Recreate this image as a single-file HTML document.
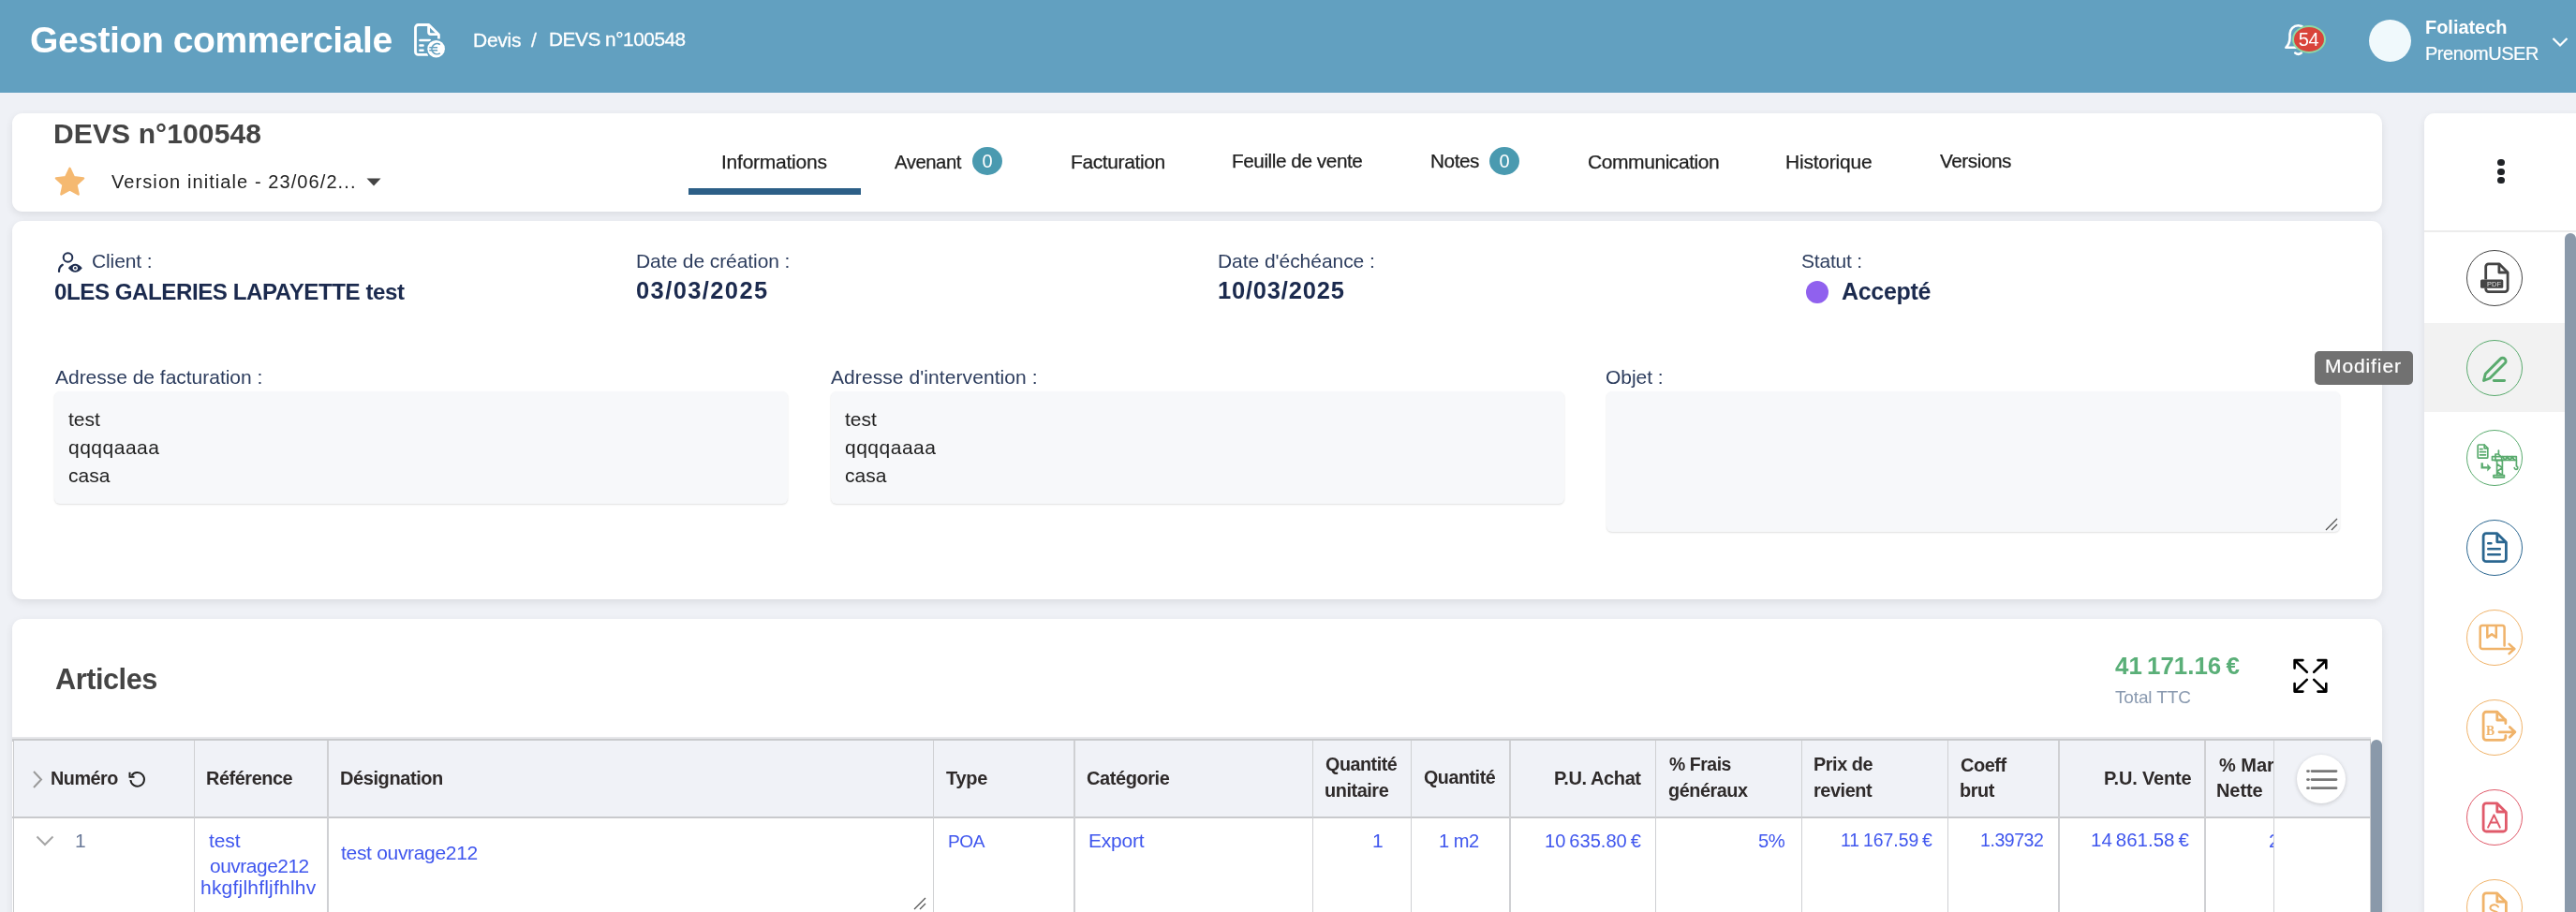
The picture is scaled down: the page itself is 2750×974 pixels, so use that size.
<!DOCTYPE html>
<html><head><meta charset="utf-8"><style>
*{box-sizing:border-box;margin:0;padding:0}
html,body{width:2750px;height:974px;overflow:hidden;background:#eff1f6;font-family:"Liberation Sans",sans-serif}
body{position:relative}
.abs{position:absolute}
.t{position:absolute;white-space:nowrap;line-height:1;-webkit-font-smoothing:antialiased;will-change:transform}
.ic{position:absolute;overflow:visible;will-change:transform}
#hdr{position:absolute;left:0;top:0;width:2750px;height:99px;background:#62a0c0}
.card{position:absolute;background:#fff;border-radius:11px;box-shadow:0 3px 8px rgba(0,0,0,0.085)}
.badge54{position:absolute;left:2447px;top:27px;width:36px;height:30px;border-radius:50%;background:#d9443a;border:2px solid #8ed9a5;color:#fff;font-size:20px;line-height:26.5px;text-align:center;letter-spacing:-0.3px;text-indent:-1px;will-change:transform}
.avatar{position:absolute;left:2529px;top:21px;width:45px;height:45px;border-radius:50%;background:#f0f9fc}
.tbadge{position:absolute;width:32px;height:30px;border-radius:50%;background:#4a9ab0;color:#fff;font-size:20px;line-height:30px;text-align:center;will-change:transform}
.box{position:absolute;background:#f7f8fa;border-radius:6px;box-shadow:0 1px 2px rgba(0,0,0,0.13)}
.menubtn{position:absolute;left:2452px;top:806px;width:52px;height:52px;border-radius:50%;background:#fff;box-shadow:0 1px 4px rgba(0,0,0,0.18)}
.ring{position:absolute;width:60px;height:60px;border-radius:50%;border:1.8px solid #444}
</style></head><body>
<div id="hdr"></div>
<div class="t" style="left:32.05px;top:22.92px;font-size:39.08px;font-weight:700;color:#fff;letter-spacing:-0.450px;">Gestion commerciale</div>
<svg class="ic" style="left:438px;top:22px" width="40" height="42" viewBox="0 0 40 42">
<path d="M19 36.4H8.5a3 3 0 0 1-3-3V7.5a3 3 0 0 1 3-3h11.3L30.4 15v4.5" fill="none" stroke="#fff" stroke-width="2.8" stroke-linejoin="round"/>
<path d="M19.6 5v7.3a2.3 2.3 0 0 0 2.3 2.3H29" fill="none" stroke="#fff" stroke-width="2.8" stroke-linejoin="round"/>
<path d="M10.4 21h10.5M10.4 26.5h3.2M10.4 31.8h3.2" stroke="#fff" stroke-width="2.5" stroke-linecap="round"/>
<circle cx="27.6" cy="30.2" r="10.8" fill="#62a0c0"/>
<circle cx="27.6" cy="30.2" r="9.3" fill="#fff"/>
<path d="M31.8 25.6a5.6 5.6 0 1 0 0 9.2" fill="none" stroke="#62a0c0" stroke-width="1.6"/>
<path d="M20.3 28.8h8.8M20.3 31.8h8.8" stroke="#62a0c0" stroke-width="1.4"/>
</svg>
<div class="t" style="left:504.80px;top:32.22px;font-size:21px;font-weight:400;color:#fff;letter-spacing:-0.253px;-webkit-text-stroke:0.3px #fff;">Devis</div>
<div class="t" style="left:567.00px;top:32.22px;font-size:21px;font-weight:400;color:#fff;letter-spacing:0.000px;-webkit-text-stroke:0.3px #fff;">/</div>
<div class="t" style="left:585.81px;top:32.40px;font-size:20.79px;font-weight:400;color:#fff;letter-spacing:-0.450px;-webkit-text-stroke:0.3px #fff;">DEVS n°100548</div>
<svg class="ic" style="left:2432px;top:20px" width="40" height="44" viewBox="0 0 40 44">
<path d="M8.3 30.8c2.7-2.7 4.2-5.5 4.2-10.5v-4a9 9 0 0 1 18 0v4c0 5 1.5 7.8 4.2 10.5z" fill="none" stroke="#fff" stroke-width="2.6" stroke-linejoin="round"/>
<path d="M18.2 36.6q3.3 2.6 6.6 0" fill="none" stroke="#fff" stroke-width="2.6" stroke-linecap="round"/>
</svg>
<div class="badge54">54</div>
<div class="avatar"></div>
<div class="t" style="left:2588.70px;top:18.67px;font-size:20px;font-weight:700;color:#fff;letter-spacing:-0.035px;">Foliatech</div>
<div class="t" style="left:2588.75px;top:46.99px;font-size:19.98px;font-weight:400;color:#fff;letter-spacing:-0.450px;-webkit-text-stroke:0.2px #fff;">PrenomUSER</div>
<svg class="ic" style="left:2723px;top:38px" width="20" height="14" viewBox="0 0 20 14">
<path d="M2.5 3l7.5 7.5L17.5 3" fill="none" stroke="#fff" stroke-width="2.2"/></svg>
<div class="card" style="left:13px;top:121px;width:2530px;height:105px"></div>
<div class="t" style="left:56.90px;top:127.80px;font-size:30px;font-weight:700;color:#444;letter-spacing:0.127px;">DEVS n°100548</div>
<svg class="ic" style="left:57px;top:178px" width="35" height="33" viewBox="0 0 24 23">
<path d="M12 1.2l3.1 6.6 7.1.8-5.3 4.9 1.5 7.1L12 17l-6.4 3.6 1.5-7.1L1.8 8.6l7.1-.8z" fill="#f5b971" stroke="#f5b971" stroke-width="1.6" stroke-linejoin="round"/></svg>
<div class="t" style="left:118.90px;top:183.87px;font-size:20px;font-weight:400;color:#222;letter-spacing:1.083px;">Version initiale - 23/06/2...</div>
<svg class="ic" style="left:391px;top:190px" width="16" height="9" viewBox="0 0 16 9"><path d="M0.5 0.5h15L8 8.5z" fill="#444"/></svg>
<div class="t" style="left:769.60px;top:162.22px;font-size:21px;font-weight:400;color:#1f1f1f;letter-spacing:-0.241px;-webkit-text-stroke:0.25px #1f1f1f;">Informations</div>
<div class="t" style="left:955.40px;top:162.82px;font-size:20.3px;font-weight:400;color:#1f1f1f;letter-spacing:-0.450px;-webkit-text-stroke:0.25px #1f1f1f;">Avenant</div>
<div class="t" style="left:1142.50px;top:162.22px;font-size:21px;font-weight:400;color:#1f1f1f;letter-spacing:-0.387px;-webkit-text-stroke:0.25px #1f1f1f;">Facturation</div>
<div class="t" style="left:1314.71px;top:162.41px;font-size:20.78px;font-weight:400;color:#1f1f1f;letter-spacing:-0.450px;-webkit-text-stroke:0.25px #1f1f1f;">Feuille de vente</div>
<div class="t" style="left:1526.51px;top:162.41px;font-size:20.78px;font-weight:400;color:#1f1f1f;letter-spacing:-0.450px;-webkit-text-stroke:0.25px #1f1f1f;">Notes</div>
<div class="t" style="left:1694.50px;top:162.22px;font-size:21px;font-weight:400;color:#1f1f1f;letter-spacing:-0.426px;-webkit-text-stroke:0.25px #1f1f1f;">Communication</div>
<div class="t" style="left:1906.00px;top:162.22px;font-size:21px;font-weight:400;color:#1f1f1f;letter-spacing:-0.207px;-webkit-text-stroke:0.25px #1f1f1f;">Historique</div>
<div class="t" style="left:2071.00px;top:162.42px;font-size:20.77px;font-weight:400;color:#1f1f1f;letter-spacing:-0.450px;-webkit-text-stroke:0.25px #1f1f1f;">Versions</div>
<div class="abs" style="left:735px;top:201px;width:184px;height:7px;background:#2c5f87"></div>
<div class="tbadge" style="left:1038px;top:157px">0</div>
<div class="tbadge" style="left:1590.4px;top:157px">0</div>
<div class="card" style="left:13px;top:236px;width:2530px;height:404px"></div>
<svg class="ic" style="left:58px;top:266px" width="34" height="28" viewBox="0 0 34 28">
<circle cx="14.5" cy="9" r="4.8" fill="none" stroke="#1e2d4f" stroke-width="2"/>
<path d="M8.8 16.8a8 8 0 0 0-3.8 7.2" fill="none" stroke="#1e2d4f" stroke-width="2.2" stroke-linecap="round"/>
<path d="M14.8 20.3q7.5-9 15 0q-7.5 9-15 0z" fill="#1e2d4f"/>
<circle cx="22.3" cy="20.3" r="2.6" fill="#fff"/><circle cx="22.3" cy="20.3" r="1.2" fill="#1e2d4f"/>
</svg>
<div class="t" style="left:97.90px;top:268.22px;font-size:21px;font-weight:400;color:#2d3d5e;letter-spacing:-0.118px;">Client :</div>
<div class="t" style="left:57.55px;top:299.57px;font-size:24.13px;font-weight:700;color:#1b2a4e;letter-spacing:-0.450px;">0LES GALERIES LAPAYETTE test</div>
<div class="t" style="left:679.00px;top:268.22px;font-size:21px;font-weight:400;color:#2d3d5e;letter-spacing:-0.078px;">Date de création :</div>
<div class="t" style="left:679.00px;top:298.41px;font-size:25.5px;font-weight:700;color:#1b2a4e;letter-spacing:1.395px;">03/03/2025</div>
<div class="t" style="left:1300.30px;top:268.22px;font-size:21px;font-weight:400;color:#2d3d5e;letter-spacing:-0.049px;">Date d'échéance :</div>
<div class="t" style="left:1300.30px;top:298.41px;font-size:25.5px;font-weight:700;color:#1b2a4e;letter-spacing:0.806px;">10/03/2025</div>
<div class="t" style="left:1922.90px;top:268.22px;font-size:21px;font-weight:400;color:#2d3d5e;letter-spacing:-0.200px;">Statut :</div>
<div class="abs" style="left:1928px;top:300px;width:24px;height:24px;border-radius:50%;background:#9061ee"></div>
<div class="t" style="left:1966.00px;top:298.64px;font-size:25px;font-weight:700;color:#1b2a4e;letter-spacing:-0.310px;">Accepté</div>
<div class="t" style="left:58.50px;top:392.22px;font-size:21px;font-weight:400;color:#2d3d5e;letter-spacing:-0.020px;">Adresse de facturation :</div>
<div class="t" style="left:886.70px;top:392.22px;font-size:21px;font-weight:400;color:#2d3d5e;letter-spacing:0.076px;">Adresse d'intervention :</div>
<div class="t" style="left:1714.30px;top:392.22px;font-size:21px;font-weight:400;color:#2d3d5e;letter-spacing:-0.055px;">Objet :</div>
<div class="box" style="left:58px;top:418px;width:783px;height:120px"></div>
<div class="t" style="left:73.40px;top:437.22px;font-size:21px;font-weight:400;color:#222;letter-spacing:0.000px;">test</div>
<div class="t" style="left:73.40px;top:467.22px;font-size:21px;font-weight:400;color:#222;letter-spacing:0.507px;">qqqqaaaa</div>
<div class="t" style="left:73.40px;top:497.22px;font-size:21px;font-weight:400;color:#222;letter-spacing:0.000px;">casa</div>
<div class="box" style="left:887px;top:418px;width:783px;height:120px"></div>
<div class="t" style="left:902.40px;top:437.22px;font-size:21px;font-weight:400;color:#222;letter-spacing:0.000px;">test</div>
<div class="t" style="left:902.40px;top:467.22px;font-size:21px;font-weight:400;color:#222;letter-spacing:0.507px;">qqqqaaaa</div>
<div class="t" style="left:902.40px;top:497.22px;font-size:21px;font-weight:400;color:#222;letter-spacing:0.000px;">casa</div>
<div class="box" style="left:1715px;top:418px;width:783px;height:150px"></div>
<svg class="ic" style="left:2481px;top:552px" width="16" height="16" viewBox="0 0 16 16"><path d="M2 14L14 2M8 14l6-6" stroke="#555" stroke-width="1.3"/></svg>
<div class="card" style="left:13px;top:661px;width:2530px;height:400px"></div>
<div class="t" style="left:58.60px;top:710.05px;font-size:30.66px;font-weight:700;color:#444;letter-spacing:-0.450px;">Articles</div>
<div class="t" style="left:2257.50px;top:699.27px;font-size:25.91px;font-weight:700;color:#5aaf78;letter-spacing:-0.450px;">41 171.16 €</div>
<div class="t" style="left:2257.50px;top:734.92px;font-size:19px;font-weight:400;color:#8a9ab0;letter-spacing:-0.141px;">Total TTC</div>
<svg class="ic" style="left:2446px;top:702px" width="40" height="40" viewBox="0 0 40 40">
<g fill="none" stroke="#000" stroke-width="2.6" stroke-linecap="round" stroke-linejoin="round">
<path d="M3.6 11.6V3.1h8.8M4.2 3.8l12.6 12"/><path d="M28.5 3.1h8.8v8.5M36.7 3.8L24.2 15.8"/>
<path d="M3.6 28.1v8.5h8.8M4.2 35.9l12.6-12"/><path d="M37.3 28.1v8.5h-8.8M36.7 35.9L24.2 23.9"/>
</g></svg>
<div class="abs" style="left:13px;top:787px;width:2518px;height:2px;background:#e6e7ea"></div>
<div class="abs" style="left:13px;top:789px;width:2518px;height:2.5px;background:#c9cacd"></div>
<div class="abs" style="left:15px;top:791px;width:2516px;height:81px;background:#f0f2f7"></div>
<div class="abs" style="left:13px;top:872px;width:2518px;height:2px;background:#c9cacd"></div>
<div class="abs" style="left:13.5px;top:789px;width:1.8px;height:200px;background:#c9cacd"></div>
<div class="abs" style="left:2529.5px;top:789px;width:1.5px;height:200px;background:#c9cacd"></div>
<div class="abs" style="left:206.7px;top:791px;width:1.6px;height:200px;background:#cfd0d3"></div>
<div class="abs" style="left:349.2px;top:791px;width:1.6px;height:200px;background:#cfd0d3"></div>
<div class="abs" style="left:995.9px;top:791px;width:1.6px;height:200px;background:#cfd0d3"></div>
<div class="abs" style="left:1146.0px;top:791px;width:1.6px;height:200px;background:#cfd0d3"></div>
<div class="abs" style="left:1400.8px;top:791px;width:1.6px;height:200px;background:#cfd0d3"></div>
<div class="abs" style="left:1505.7px;top:791px;width:1.6px;height:200px;background:#cfd0d3"></div>
<div class="abs" style="left:1611.0px;top:791px;width:1.6px;height:200px;background:#cfd0d3"></div>
<div class="abs" style="left:1766.9px;top:791px;width:1.6px;height:200px;background:#cfd0d3"></div>
<div class="abs" style="left:1922.7px;top:791px;width:1.6px;height:200px;background:#cfd0d3"></div>
<div class="abs" style="left:2078.7px;top:791px;width:1.6px;height:200px;background:#cfd0d3"></div>
<div class="abs" style="left:2197.3px;top:791px;width:1.6px;height:200px;background:#cfd0d3"></div>
<div class="abs" style="left:2353.2px;top:791px;width:1.6px;height:200px;background:#cfd0d3"></div>
<div class="abs" style="left:2426.6px;top:791px;width:1.6px;height:200px;background:#cfd0d3"></div>
<svg class="ic" style="left:33px;top:822px" width="14" height="21" viewBox="0 0 14 21"><path d="M3 2l8 8.5L3 19" fill="none" stroke="#9a9a9a" stroke-width="2"/></svg>
<div class="t" style="left:53.71px;top:822.06px;font-size:19.78px;font-weight:700;color:#2e2a2a;letter-spacing:-0.450px;">Numéro</div>
<svg class="ic" style="left:136px;top:822px" width="21" height="21" viewBox="0 0 21 21">
<path d="M4.5 6.5A7.3 7.3 0 1 1 3.4 11" fill="none" stroke="#222" stroke-width="2"/><path d="M2.5 2.8v5h5" fill="none" stroke="#222" stroke-width="2"/></svg>
<div class="t" style="left:219.70px;top:821.64px;font-size:19.92px;font-weight:700;color:#2e2a2a;letter-spacing:-0.450px;">Référence</div>
<div class="t" style="left:362.50px;top:820.77px;font-size:20px;font-weight:700;color:#2e2a2a;letter-spacing:-0.414px;">Désignation</div>
<div class="t" style="left:1010.00px;top:820.87px;font-size:20px;font-weight:700;color:#2e2a2a;letter-spacing:-0.291px;">Type</div>
<div class="t" style="left:1160.00px;top:820.57px;font-size:20px;font-weight:700;color:#2e2a2a;letter-spacing:-0.428px;">Catégorie</div>
<div class="t" style="left:1415.00px;top:807.21px;font-size:19.72px;font-weight:700;color:#2e2a2a;letter-spacing:-0.450px;">Quantité</div>
<div class="t" style="left:1414.01px;top:834.55px;font-size:19.9px;font-weight:700;color:#2e2a2a;letter-spacing:-0.450px;">unitaire</div>
<div class="t" style="left:1519.90px;top:821.03px;font-size:19.69px;font-weight:700;color:#2e2a2a;letter-spacing:-0.450px;">Quantité</div>
<div class="t" style="left:1659.40px;top:820.77px;font-size:20px;font-weight:700;color:#2e2a2a;letter-spacing:-0.409px;">P.U. Achat</div>
<div class="t" style="left:1781.70px;top:807.45px;font-size:19.43px;font-weight:700;color:#2e2a2a;letter-spacing:-0.450px;">% Frais</div>
<div class="t" style="left:1781.10px;top:834.60px;font-size:19.85px;font-weight:700;color:#2e2a2a;letter-spacing:-0.450px;">généraux</div>
<div class="t" style="left:1936.01px;top:807.06px;font-size:19.89px;font-weight:700;color:#2e2a2a;letter-spacing:-0.450px;">Prix de</div>
<div class="t" style="left:1936.00px;top:834.53px;font-size:19.93px;font-weight:700;color:#2e2a2a;letter-spacing:-0.450px;">revient</div>
<div class="t" style="left:2092.90px;top:806.99px;font-size:19.98px;font-weight:700;color:#2e2a2a;letter-spacing:-0.450px;">Coeff</div>
<div class="t" style="left:2091.90px;top:834.55px;font-size:19.91px;font-weight:700;color:#2e2a2a;letter-spacing:-0.450px;">brut</div>
<div class="t" style="left:2246.30px;top:820.77px;font-size:20px;font-weight:700;color:#2e2a2a;letter-spacing:-0.168px;">P.U. Vente</div>
<div class="t" style="left:2366.40px;top:834.47px;font-size:20px;font-weight:700;color:#2e2a2a;letter-spacing:-0.072px;">Nette</div>
<div class="abs" style="left:2355px;top:791px;width:71.5px;height:81px;overflow:hidden"><div class="t" style="left:13.60px;top:15.97px;font-size:20px;font-weight:700;color:#2e2a2a;letter-spacing:0.000px;">% Marge</div>
</div>
<div class="menubtn"></div>
<svg class="ic" style="left:2460px;top:818px" width="38" height="28" viewBox="0 0 38 28">
<g stroke="#777" stroke-width="2.8" stroke-linecap="round"><path d="M3.5 5.6h1M3.5 14.6h1M3.5 23.7h1"/><path d="M8 5.6h26M8 14.6h26M8 23.7h26"/></g></svg>
<div class="abs" style="left:2531px;top:790px;width:12px;height:300px;background:#8a99aa;border-radius:6px 6px 0 0"></div>
<svg class="ic" style="left:37px;top:890px" width="22" height="16" viewBox="0 0 22 16"><path d="M2.5 3.5l8.5 8.5 8.5-8.5" fill="none" stroke="#a5a5a5" stroke-width="2"/></svg>
<div class="t" style="left:80.30px;top:887.22px;font-size:21px;font-weight:400;color:#6b7a99;letter-spacing:0.000px;">1</div>
<div class="t" style="left:223.30px;top:886.62px;font-size:21px;font-weight:400;color:#3f56ee;letter-spacing:-0.105px;">test</div>
<div class="t" style="left:223.70px;top:914.82px;font-size:20.89px;font-weight:400;color:#3f56ee;letter-spacing:-0.450px;">ouvrage212</div>
<div class="t" style="left:214.00px;top:936.82px;font-size:21px;font-weight:400;color:#3f56ee;letter-spacing:0.212px;">hkgfjlhfljfhlhv</div>
<div class="t" style="left:364.40px;top:900.02px;font-size:21px;font-weight:400;color:#3f56ee;letter-spacing:-0.309px;">test ouvrage212</div>
<svg class="ic" style="left:974px;top:957px" width="16" height="16" viewBox="0 0 16 16"><path d="M2 14L14 2M8 14l6-6" stroke="#555" stroke-width="1.3"/></svg>
<div class="t" style="left:1012.29px;top:888.50px;font-size:19.14px;font-weight:400;color:#3f56ee;letter-spacing:-0.450px;">POA</div>
<div class="t" style="left:1162.30px;top:886.92px;font-size:21px;font-weight:400;color:#3f56ee;letter-spacing:-0.212px;">Export</div>
<div class="t" style="left:1464.80px;top:886.92px;font-size:21px;font-weight:400;color:#3f56ee;letter-spacing:0.000px;">1</div>
<div class="t" style="left:1536.04px;top:887.69px;font-size:20.09px;font-weight:400;color:#3f56ee;letter-spacing:-0.450px;">1 m2</div>
<div class="t" style="left:1648.74px;top:887.70px;font-size:20.08px;font-weight:400;color:#3f56ee;letter-spacing:-0.450px;">10 635.80 €</div>
<div class="t" style="left:1877.20px;top:887.60px;font-size:20.2px;font-weight:400;color:#3f56ee;letter-spacing:-0.450px;">5%</div>
<div class="t" style="left:1965.08px;top:888.29px;font-size:19.38px;font-weight:400;color:#3f56ee;letter-spacing:-0.450px;">11 167.59 €</div>
<div class="t" style="left:2114.07px;top:888.18px;font-size:19.52px;font-weight:400;color:#3f56ee;letter-spacing:-0.450px;">1.39732</div>
<div class="t" style="left:2231.73px;top:887.37px;font-size:20.47px;font-weight:400;color:#3f56ee;letter-spacing:-0.450px;">14 861.58 €</div>
<div class="abs" style="left:2355px;top:874px;width:71.5px;height:100px;overflow:hidden"><div class="t" style="left:67.00px;top:12.92px;font-size:21px;font-weight:400;color:#3f56ee;letter-spacing:0.000px;">28</div>
</div>
<div class="card" style="left:2588px;top:121px;width:240px;height:900px;border-radius:11px"></div>
<div class="abs" style="left:2588px;top:246px;width:162px;height:2px;background:#ececec"></div>
<div class="abs" style="left:2666.4px;top:170.0px;width:7.4px;height:7.4px;border-radius:50%;background:#1f2226"></div>
<div class="abs" style="left:2666.4px;top:179.5px;width:7.4px;height:7.4px;border-radius:50%;background:#1f2226"></div>
<div class="abs" style="left:2666.4px;top:188.9px;width:7.4px;height:7.4px;border-radius:50%;background:#1f2226"></div>
<div class="abs" style="left:2588px;top:345px;width:150px;height:95px;background:#f2f2f2"></div>
<div class="abs" style="left:2738px;top:249px;width:12px;height:800px;background:#8a99aa;border-radius:6px 6px 0 0"></div>
<div class="ring" style="left:2633px;top:267px;border-color:#444"></div>
<div class="ring" style="left:2633px;top:363px;border-color:#5aab6e"></div>
<div class="ring" style="left:2633px;top:459px;border-color:#5aab6e"></div>
<div class="ring" style="left:2633px;top:555px;border-color:#2a6690"></div>
<div class="ring" style="left:2633px;top:651px;border-color:#f0b36a"></div>
<div class="ring" style="left:2633px;top:747px;border-color:#f0b36a"></div>
<div class="ring" style="left:2633px;top:842.7px;border-color:#e05a6a"></div>
<div class="ring" style="left:2633px;top:939px;border-color:#f0b36a"></div>
<svg class="ic" style="left:2633px;top:267px" width="60" height="60" viewBox="0 0 60 60">
<path d="M20.7 31.5V17.8a3 3 0 0 1 3-3h11.2l9.2 9.2v17.6a3 3 0 0 1-3 3H23.7a3 3 0 0 1-3-3v-1" fill="none" stroke="#444" stroke-width="2.8" stroke-linejoin="round"/>
<path d="M34.9 14.8v9.2h9.2" fill="none" stroke="#444" stroke-width="2.8" stroke-linejoin="round"/>
<rect x="15" y="31.4" width="24.3" height="9.4" rx="1.5" fill="#444"/>
<text x="29.6" y="38.8" font-family="Liberation Sans" font-size="7.4" fill="#e6e6e6" text-anchor="middle" letter-spacing="0.2">PDF</text>
</svg>
n<svg class="ic" style="left:2633px;top:363px" width="60" height="60" viewBox="0 0 60 60">
<path d="M18.5 43.5l1.8-7.2 16.2-16.2a3 3 0 0 1 4.3 0l.4.4a3 3 0 0 1 0 4.3L25 41z" fill="none" stroke="#5aab6e" stroke-width="2.9" stroke-linejoin="round"/>
<path d="M29.3 43.5h11.3" stroke="#5aab6e" stroke-width="2.9" stroke-linecap="round"/>
</svg>
n<svg class="ic" style="left:2633px;top:459px" width="60" height="60" viewBox="0 0 60 60">
<g fill="none" stroke="#5aab6e" stroke-width="1.7" stroke-linejoin="round" stroke-linecap="round">
<path d="M13.2 16h6l3.6 3.6v9.6a1 1 0 0 1-1 1h-8.6a1 1 0 0 1-1-1V17a1 1 0 0 1 1-1z"/>
<path d="M19.2 16.2v3.6h3.4"/>
<path d="M14.5 20.6h2.6M14.5 23.7h6M14.5 26.8h6"/>
<path d="M27.5 28.6h25.8v3.8H27.5z"/>
<path d="M38.5 28.6l2.6 3.8 2.6-3.8 2.6 3.8 2.6-3.8 2.6 3.8"/>
<path d="M31 33V26h3.2l3.5 3.6V33"/>
<path d="M34.4 22.2v3.8"/>
<path d="M32.6 32.6h5.8v15.8h-5.8zM32.6 36.5l5.8 4M38.4 40.5l-5.8 4M32.6 44.5l5.8 3.9"/>
<path d="M29 48.6h11.4v2.2H29z"/>
<path d="M53.4 32.6v6.2M53.4 38.8a1.8 1.8 0 1 1-2.2 1.8"/>
</g>
<path d="M16.7 35.2v5.2h6" fill="none" stroke="#5aab6e" stroke-width="2.4"/>
<path d="M22.3 36.2l4 4.2-4 4.2z" fill="#5aab6e"/>
</svg>
n<svg class="ic" style="left:2633px;top:555px" width="60" height="60" viewBox="0 0 60 60">
<path d="M18.1 41.7V17.7a3 3 0 0 1 3-3h11.7l9.6 9.6v17.4a3 3 0 0 1-3 3H21.1a3 3 0 0 1-3-3z" fill="none" stroke="#2a6690" stroke-width="2.8" stroke-linejoin="round"/>
<path d="M32.8 14.9v8.9h9.4" fill="none" stroke="#2a6690" stroke-width="2.8" stroke-linejoin="round"/>
<path d="M23.2 25.3h3.2M23.2 31.35h12.6M23.2 37.3h12.6" stroke="#2a6690" stroke-width="2.5" stroke-linecap="round"/>
</svg>
n<svg class="ic" style="left:2633px;top:651px" width="60" height="60" viewBox="0 0 60 60">
<g fill="none" stroke="#f0b36a" stroke-width="2.5" stroke-linejoin="round" stroke-linecap="round">
<path d="M40.6 38.4V19.6a2.5 2.5 0 0 0-2.5-2.5H17.2a2.5 2.5 0 0 0-2.5 2.5v19.9a2.5 2.5 0 0 0 2.5 2.5h34"/>
<path d="M22.3 17.3v12.5l4.8-3.6 4.7 3.6V17.3"/><path d="M45.6 36.8l5.6 5.2-5.6 5.2"/>
</g></svg>
n<svg class="ic" style="left:2633px;top:747px" width="60" height="60" viewBox="0 0 60 60">
<g fill="none" stroke="#f0b36a" stroke-width="2.8" stroke-linejoin="round" stroke-linecap="round">
<path d="M41.85 38.6v1.7a3 3 0 0 1-3 3H21.1a3 3 0 0 1-3-3V16.25a3 3 0 0 1 3-3h11.7l9.05 9.05v3.3"/>
<path d="M32.8 13.4v8.6h8.9"/>
<path d="M35 34.8h16.6M46.3 29.4l5.6 5.4-5.6 5.4"/>
</g><text x="25.6" y="38.4" font-family="Liberation Serif" font-weight="700" font-size="13.6" fill="#f0b36a" text-anchor="middle">B</text></svg>
n<svg class="ic" style="left:2633px;top:842.7px" width="60" height="60" viewBox="0 0 60 60">
<path d="M18.1 42V17.95a3 3 0 0 1 3-3h11.7l9.6 9.6V42a3 3 0 0 1-3 3H21.1a3 3 0 0 1-3-3z" fill="none" stroke="#e05a6a" stroke-width="2.8" stroke-linejoin="round"/>
<path d="M32.8 15.1v8.9h9.4" fill="none" stroke="#e05a6a" stroke-width="2.8" stroke-linejoin="round"/>
<path d="M23.1 40.6l6.35-13.2 6.35 13.2M25.5 35.4h7.9" fill="none" stroke="#e05a6a" stroke-width="2" stroke-linecap="round" stroke-linejoin="round"/>
</svg>
n<svg class="ic" style="left:2633px;top:939px" width="60" height="60" viewBox="0 0 60 60">
<path d="M18.1 42V17.95a3 3 0 0 1 3-3h11.7l9.6 9.6V42a3 3 0 0 1-3 3H21.1a3 3 0 0 1-3-3z" fill="none" stroke="#f0b36a" stroke-width="2.8" stroke-linejoin="round"/>
<path d="M32.8 15.1v8.9h9.4" fill="none" stroke="#f0b36a" stroke-width="2.8" stroke-linejoin="round"/>
<path d="M34 29.5a4.5 3.6 0 0 0-8.6 1c0 4.5 9.2 2.8 9.2 7.2a4.6 3.6 0 0 1-9.3 .6" fill="none" stroke="#f0b36a" stroke-width="2" stroke-linecap="round"/>
</svg>
n<div class="abs" style="left:2471px;top:375px;width:105px;height:36px;background:#717171;border-radius:5px"></div>
<div class="t" style="left:2482.00px;top:380.22px;font-size:21px;font-weight:400;color:#fff;letter-spacing:0.901px;-webkit-text-stroke:0.2px #fff;">Modifier</div>
</body></html>
